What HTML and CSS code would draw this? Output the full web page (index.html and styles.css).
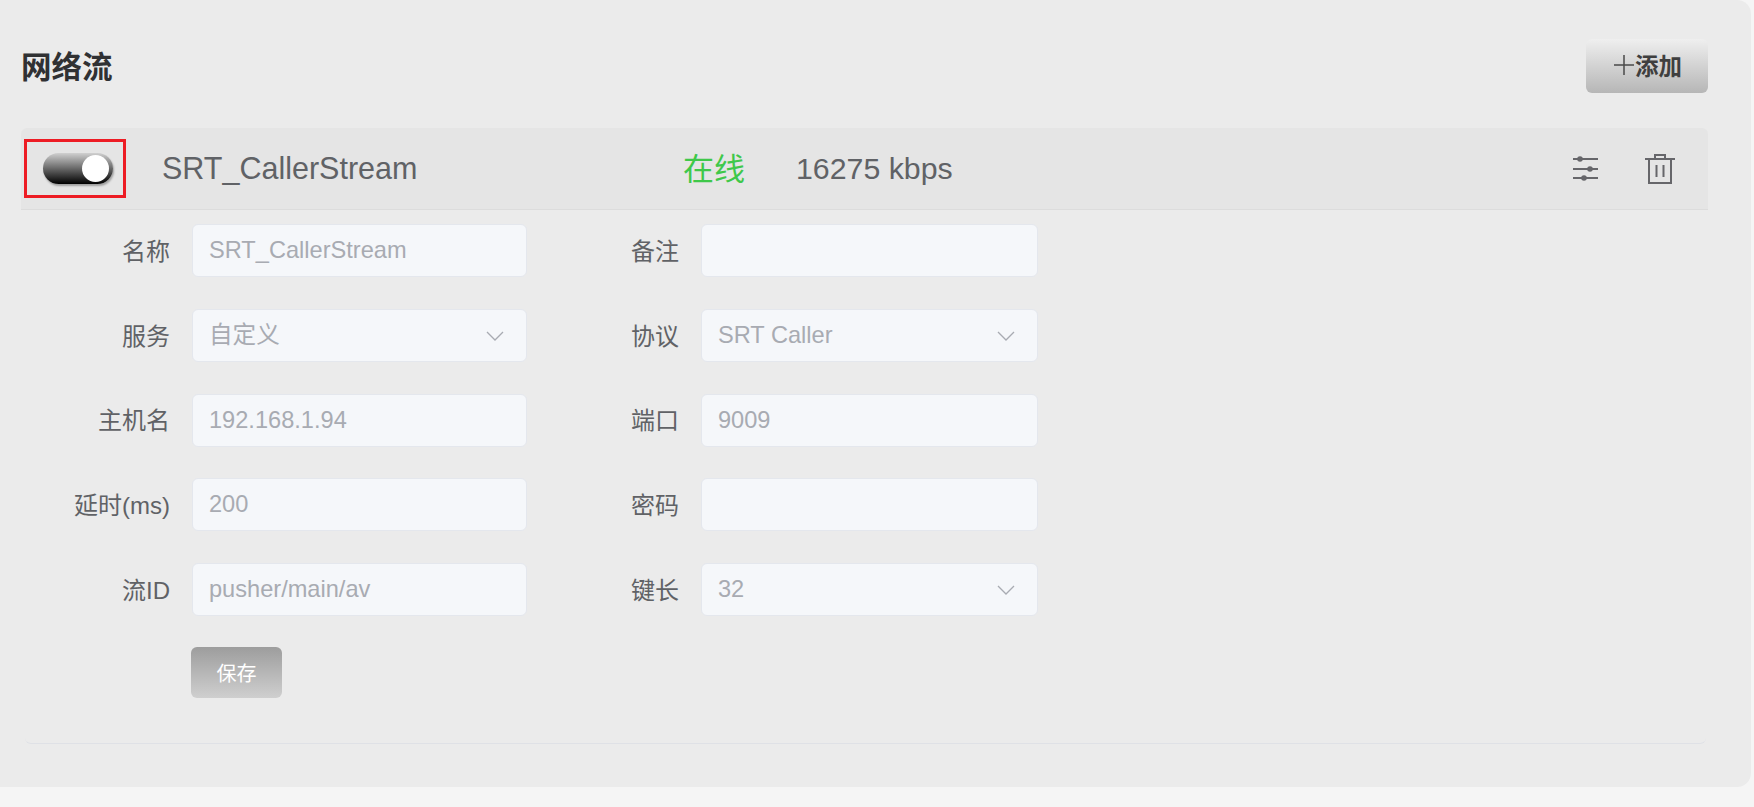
FILE: index.html
```html
<!DOCTYPE html>
<html lang="zh-CN">
<head>
    <meta charset="UTF-8">
    <meta name="viewport" content="width=device-width, initial-scale=1.0">
    <title>网络流</title>
    <link rel="stylesheet" href="styles.css">
</head>
<body>
    <div class="panel">
        <div class="panel-head">
            <h1>网络流</h1>
            <button class="add-btn">
                <svg class="plus" width="20" height="20" viewBox="0 0 20 20"><path d="M0 10h20M10 0v20" fill="none" stroke="#4a4a4a" stroke-width="1.500"/></svg>添加
            </button>
        </div>
        <div class="stream">
            <div class="stream-head">
                <div class="toggle-box">
                    <div class="toggle"><span class="knob"></span></div>
                </div>
                <span class="stream-name">SRT_CallerStream</span>
                <span class="stream-state">在线</span>
                <span class="stream-rate">16275 kbps</span>
                <div class="stream-tools">
                    <svg class="tool" width="30" height="30" viewBox="0 0 30 30" fill="none" stroke="#66666a" stroke-width="2">
                        <path d="M3 5h25M3 15h25M3 24h25"/>
                        <circle cx="10" cy="5" r="2.800" fill="#66666a" stroke="none"/>
                        <circle cx="20" cy="15" r="2.800" fill="#66666a" stroke="none"/>
                        <circle cx="14" cy="24" r="2.800" fill="#66666a" stroke="none"/>
                    </svg>
                    <svg class="tool" width="30" height="30" viewBox="0 0 30 30" fill="none" stroke="#66666a" stroke-width="2">
                        <path d="M0 5h30M4 5v24h22V5M10 5V1h10v4M11.500 11v12M18.500 11v12"/>
                    </svg>
                </div>
            </div>
            <form class="stream-form">
                <label class="field-label">名称</label>
                <input class="field" type="text" value="SRT_CallerStream" disabled>
                <label class="field-label">备注</label>
                <input class="field" type="text" value="" disabled>

                <label class="field-label">服务</label>
                <div class="field select">自定义<svg class="chevron" width="18" height="10" viewBox="0 0 18 10"><path d="M1 1l8 8 8-8" fill="none" stroke="#a8abb2" stroke-width="1.300"/></svg></div>
                <label class="field-label">协议</label>
                <div class="field select">SRT Caller<svg class="chevron" width="18" height="10" viewBox="0 0 18 10"><path d="M1 1l8 8 8-8" fill="none" stroke="#a8abb2" stroke-width="1.300"/></svg></div>

                <label class="field-label">主机名</label>
                <input class="field" type="text" value="192.168.1.94" disabled>
                <label class="field-label">端口</label>
                <input class="field" type="text" value="9009" disabled>

                <label class="field-label">延时(ms)</label>
                <input class="field" type="text" value="200" disabled>
                <label class="field-label">密码</label>
                <input class="field" type="text" value="" disabled>

                <label class="field-label">流ID</label>
                <input class="field" type="text" value="pusher/main/av" disabled>
                <label class="field-label">键长</label>
                <div class="field select">32<svg class="chevron" width="18" height="10" viewBox="0 0 18 10"><path d="M1 1l8 8 8-8" fill="none" stroke="#a8abb2" stroke-width="1.300"/></svg></div>

                <div class="form-actions">
                    <button type="button" class="save-btn">保存</button>
                </div>
            </form>
            <div class="stream-end"></div>
        </div>
    </div>
</body>
</html>
```

FILE: styles.css
```css
html, body {
    height: 100%;
}
body {
    margin: 0;
    background-color: #f5f5f5;
    font-family: "Liberation Sans", "Noto Sans CJK SC", Arial, sans-serif;
    color: #606266;
    overflow: hidden;
}
.panel {
    width: 1751px;
    height: 787px;
    box-sizing: border-box;
    padding: 39px 43px 0 21px;
    background-color: #ebebeb;
    border-radius: 0 14px 14px 0;
}
.panel-head {
    display: flex;
    justify-content: space-between;
    align-items: center;
    height: 54px;
    margin-bottom: 35px;
}
h1 {
    margin: 0;
    padding-bottom: 2px;
    font-size: 30.500px;
    font-weight: 700;
    color: #303133;
}
.add-btn {
    display: flex;
    align-items: center;
    justify-content: center;
    gap: 1px;
    width: 122px;
    height: 54px;
    padding: 0 0 2px 2px;
    border: none;
    border-radius: 6px;
    background: linear-gradient(#efefef, #b6b6b6);
    color: #3f3f3f;
    font-family: inherit;
    font-size: 23.500px;
    font-weight: 700;
}
.stream-head {
    display: flex;
    align-items: center;
    height: 81px;
    background-color: #e5e5e5;
    border-bottom: 1px solid #dcdcdc;
    border-radius: 6px 6px 0 0;
}
.toggle-box {
    display: flex;
    align-items: center;
    justify-content: center;
    box-sizing: border-box;
    width: 102px;
    height: 59px;
    margin-left: 3px;
    padding-left: 6px;
    border: 3px solid #ed1c24;
}
.toggle {
    position: relative;
    flex: none;
    width: 70px;
    height: 31px;
    border-radius: 16px;
    background: linear-gradient(#d0d0d0, #000);
    box-shadow: 1px 2px 2px rgba(0, 0, 0, 0.3);
}
.knob {
    position: absolute;
    top: 2px;
    right: 4px;
    width: 27px;
    height: 27px;
    border-radius: 50%;
    background-color: #fff;
}
.stream-name {
    width: 521px;
    margin-left: 36px;
    font-size: 30.500px;
}
.stream-state {
    width: 113px;
    padding-bottom: 4px;
    font-size: 31px;
    color: #3fc84a;
}
.stream-rate {
    font-size: 30.300px;
}
.stream-tools {
    display: flex;
    align-items: center;
    gap: 45px;
    margin-left: auto;
    margin-right: 33px;
}
.stream-form {
    display: grid;
    grid-template-columns: 149px 335px 130px 337px;
    grid-auto-rows: 52.700px;
    row-gap: 32px;
    column-gap: 22px;
    align-items: center;
    padding-top: 14.500px;
}
.field-label {
    padding-bottom: 3px;
    font-size: 24px;
    text-align: right;
    color: #606266;
}
.field {
    box-sizing: border-box;
    width: 100%;
    height: 53px;
    margin: 0;
    padding: 0 22px 0 16px;
    border: 1px solid #e4e7ed;
    border-radius: 6px;
    background-color: #f5f7fa;
    color: #a8abb2;
    font-family: inherit;
    font-size: 23.600px;
    line-height: 51px;
    opacity: 1;
}
.select {
    display: flex;
    align-items: center;
    justify-content: space-between;
}
.form-actions {
    grid-column: 2 / 5;
    margin-left: -1px;
}
.save-btn {
    display: block;
    width: 91px;
    height: 51px;
    margin-bottom: 4px;
    padding: 0;
    border: none;
    border-radius: 6px;
    background: linear-gradient(#9d9d9d, #cfcfcf);
    color: #fff;
    font-family: inherit;
    font-size: 20px;
}
.stream-end {
    height: 42.500px;
    margin-left: 4px;
    margin-right: 2px;
    border-bottom: 1px solid #dfe1e6;
    border-radius: 0 0 6px 6px;
}
```
